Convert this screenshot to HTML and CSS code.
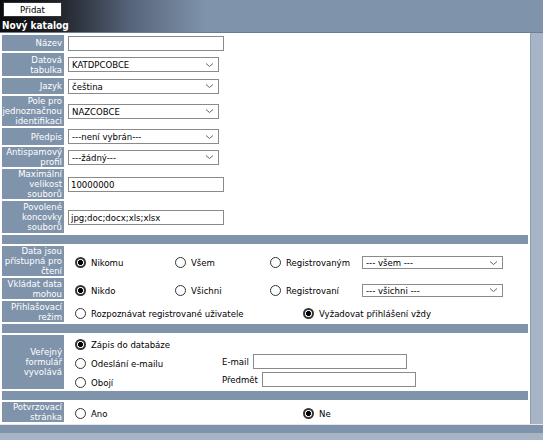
FILE: index.html
```html
<!DOCTYPE html>
<html lang="cs">
<head>
    <meta charset="UTF-8">
    <title>Nový katalog</title>
    <link rel="stylesheet" href="styles.css">
</head>
<body>
    <div class="top-bar">
        <button class="btn-add">Přidat</button>
        <h1>Nový katalog</h1>
    </div>

    <div class="page">
        <table class="form-table">
            <colgroup><col class="col-lbl"><col></colgroup>
            <tr class="h16">
                <td class="lbl">Název</td>
                <td><input type="text" class="txt w156"></td>
            </tr>
            <tr class="h23">
                <td class="lbl">Datová tabulka</td>
                <td><div class="sel w151"><span>KATDPCOBCE</span><svg width="9" height="6" viewBox="0 0 9 6"><path d="M1 1.5l3.5 3 3.5-3" fill="none" stroke="#666" stroke-width="1"/></svg></div></td>
            </tr>
            <tr class="h16">
                <td class="lbl">Jazyk</td>
                <td><div class="sel w151"><span>čeština</span><svg width="9" height="6" viewBox="0 0 9 6"><path d="M1 1.5l3.5 3 3.5-3" fill="none" stroke="#666" stroke-width="1"/></svg></div></td>
            </tr>
            <tr class="h30">
                <td class="lbl">Pole pro jednoznačnou identifikaci</td>
                <td><div class="sel w151"><span>NAZCOBCE</span><svg width="9" height="6" viewBox="0 0 9 6"><path d="M1 1.5l3.5 3 3.5-3" fill="none" stroke="#666" stroke-width="1"/></svg></div></td>
            </tr>
            <tr class="h17">
                <td class="lbl">Předpis</td>
                <td><div class="sel w151"><span>---není vybrán---</span><svg width="9" height="6" viewBox="0 0 9 6"><path d="M1 1.5l3.5 3 3.5-3" fill="none" stroke="#666" stroke-width="1"/></svg></div></td>
            </tr>
            <tr class="h19">
                <td class="lbl">Antispamový profil</td>
                <td><div class="sel w151"><span>---žádný---</span><svg width="9" height="6" viewBox="0 0 9 6"><path d="M1 1.5l3.5 3 3.5-3" fill="none" stroke="#666" stroke-width="1"/></svg></div></td>
            </tr>
            <tr class="h30">
                <td class="lbl">Maximální velikost souborů</td>
                <td><input type="text" class="txt w156" value="10000000"></td>
            </tr>
            <tr class="h32">
                <td class="lbl">Povolené koncovky souborů</td>
                <td><input type="text" class="txt w156" value="jpg;doc;docx;xls;xlsx"></td>
            </tr>
            <tr class="sep"><td colspan="2"></td></tr>

            <tr class="h30">
                <td class="lbl">Data jsou přístupná pro čtení</td>
                <td>
                    <div class="opts opts-4 low">
                        <label><span class="radio on"></span>Nikomu</label>
                        <label><span class="radio"></span>Všem</label>
                        <label><span class="radio"></span>Registrovaným</label>
                        <div class="sel sel-sm w141"><span>--- všem ---</span><svg width="9" height="6" viewBox="0 0 9 6"><path d="M1 1.5l3.5 3 3.5-3" fill="none" stroke="#666" stroke-width="1"/></svg></div>
                    </div>
                </td>
            </tr>
            <tr class="h21">
                <td class="lbl">Vkládat data mohou</td>
                <td>
                    <div class="opts opts-4 low">
                        <label><span class="radio on"></span>Nikdo</label>
                        <label><span class="radio"></span>Všichni</label>
                        <label><span class="radio"></span>Registrovaní</label>
                        <div class="sel sel-sm w141"><span>--- všichni ---</span><svg width="9" height="6" viewBox="0 0 9 6"><path d="M1 1.5l3.5 3 3.5-3" fill="none" stroke="#666" stroke-width="1"/></svg></div>
                    </div>
                </td>
            </tr>
            <tr class="h21">
                <td class="lbl">Přihlašovací režim</td>
                <td>
                    <div class="opts opts-2 low">
                        <label><span class="radio"></span>Rozpoznávat registrované uživatele</label>
                        <label><span class="radio on"></span>Vyžadovat přihlášení vždy</label>
                    </div>
                </td>
            </tr>
            <tr class="sep"><td colspan="2"></td></tr>

            <tr class="h54">
                <td class="lbl">Veřejný formulář vyvolává</td>
                <td class="top">
                    <div class="public-form">
                        <div class="stack">
                            <label><span class="radio on"></span>Zápis do databáze</label>
                            <label><span class="radio"></span>Odeslání e-mailu</label>
                            <label><span class="radio"></span>Obojí</label>
                        </div>
                        <div class="mail-fields">
                            <label>E-mail <input type="text" class="txt w154"></label>
                            <label>Předmět <input type="text" class="txt w154"></label>
                        </div>
                    </div>
                </td>
            </tr>
            <tr class="sep"><td colspan="2"></td></tr>

            <tr class="h20">
                <td class="lbl">Potvrzovací stránka</td>
                <td>
                    <div class="opts opts-2 low">
                        <label><span class="radio"></span>Ano</label>
                        <label><span class="radio on"></span>Ne</label>
                    </div>
                </td>
            </tr>
        </table>
        <div class="side"></div>
    </div>
    <div class="bottom-bar"></div>
</body>
</html>
```

FILE: styles.css
```css
body {
    margin: 0;
    padding: 0;
    background-color: #a6b4c6;
    font-family: "DejaVu Sans Condensed", "DejaVu Sans", Verdana, sans-serif;
    font-stretch: semi-condensed;
    font-size: 9.5px;
    color: #000;
}

.top-bar {
    height: 33px;
    background: linear-gradient(90deg, #0c0c10 0, #1d2026 55px, #56637a 130px, #7f93ab 205px);
    border-bottom: 1px solid #6b7d95;
    padding: 2px 0 0 0;
    box-sizing: border-box;
}

.btn-add {
    display: block;
    margin-left: 3px;
    width: 59px;
    height: 15px;
    padding: 0;
    background-color: #fff;
    border: 1px solid #333;
    font-family: inherit;
    font-stretch: inherit;
    font-size: 9.5px;
    line-height: 12px;
    text-align: center;
    color: #000;
}

.top-bar h1 {
    margin: 3px 0 0 2px;
    font-size: 10px;
    line-height: 12px;
    color: #fff;
}

.page {
    display: flex;
}

.form-table {
    width: 530px;
    table-layout: fixed;
    background-color: #fff;
    border-spacing: 2px;
    flex: none;
}

.col-lbl {
    width: 62px;
}

.form-table td {
    padding: 0;
    vertical-align: middle;
}

.form-table td.top {
    vertical-align: top;
}

.lbl {
    background-color: #7f93ab;
    color: #fff;
    text-align: right;
    line-height: 10px;
    padding: 0 2px 0 0 !important;
}

.h16 td { height: 16px; }
.h17 td { height: 17px; }
.h19 td { height: 19px; }
.h20 td { height: 20px; }
.h21 td { height: 21px; }
.h23 td { height: 23px; }
.h30 td { height: 30px; }
.h32 td { height: 32px; }
.h54 td { height: 54px; }

.sep td {
    height: 9px;
    background-color: #7f93ab;
}

.side {
    flex: 1;
    margin-top: 1px;
    border-left: 1px solid #8d9db3;
}

.txt {
    display: block;
    box-sizing: border-box;
    height: 15px;
    margin-left: 2px;
    padding: 0 2px;
    border: 1px solid #8a8a8a;
    font-family: inherit;
    font-stretch: inherit;
    font-size: 9.5px;
    background: #fff;
}

.w156 { width: 156px; }
.w154 { width: 154px; }
.w151 { width: 151px; }
.w141 { width: 141px; }

.sel {
    box-sizing: border-box;
    height: 15px;
    margin-left: 2px;
    border: 1px solid #8a8a8a;
    padding: 0 4px 0 3px;
    display: flex;
    align-items: center;
    justify-content: space-between;
    line-height: 13px;
}

.sel-sm {
    height: 13px;
    line-height: 11px;
}

.opts {
    display: grid;
    align-items: center;
    padding-left: 9px;
}

.opts.low {
    padding-top: 3px;
}

.opts-4 { grid-template-columns: 100px 95px 90px 141px; }
.opts-2 { grid-template-columns: 228px auto; }

.opts label,
.stack label {
    display: flex;
    align-items: center;
}

.radio {
    display: inline-block;
    box-sizing: border-box;
    width: 11px;
    height: 11px;
    margin-right: 5px;
    border: 1px solid #333;
    border-radius: 50%;
    background: #fff;
    flex: none;
}

.radio.on {
    border-width: 2px;
    background: radial-gradient(circle, #000 0, #000 2.2px, #fff 2.8px);
}

.public-form {
    display: flex;
    padding-left: 9px;
}

.stack {
    display: flex;
    flex-direction: column;
    gap: 7px;
    width: 147px;
    padding-top: 3px;
}

.stack label {
    height: 12px;
}

.mail-fields {
    display: flex;
    flex-direction: column;
    gap: 3px;
    padding-top: 19px;
}

.mail-fields label {
    display: flex;
    align-items: center;
}

.mail-fields .txt {
    margin-left: 4px;
}

.bottom-bar {
    height: 8px;
    background-color: #7f93ab;
    border-top: 1px solid #e4e8ee;
}
```
